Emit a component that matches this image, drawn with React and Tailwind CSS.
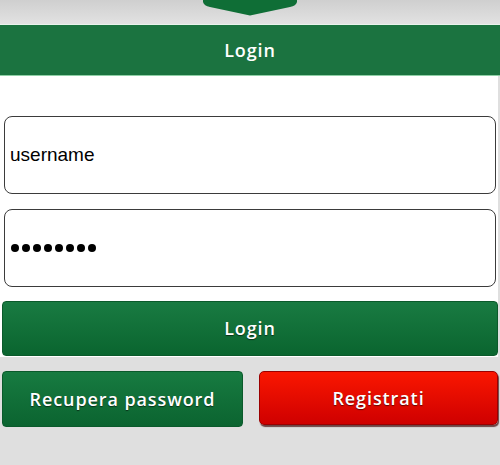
export default function App() {
  const btnText = "text-white text-[18px] font-semibold tracking-[0.9px] [text-shadow:0_1px_1px_rgba(0,0,0,0.55)]";
  return (
    <div className="w-[500px] h-[465px] bg-[#dfdfdf] overflow-hidden" style={{ fontFamily: '"Open Sans", "Noto Sans", sans-serif' }}>
      <div className="h-[24px] bg-gradient-to-b from-[#cfcfcf] to-[#e2e2e2] flex justify-center">
        <svg width="96" height="16" viewBox="0 0 96 16" className="block">
          <path d="M1 0 L1 2 Q2 6 8 7 L48 15.5 L88 7 Q94 6 95 2 L95 0 Z" fill="#0f6e36" />
        </svg>
      </div>
      <div className="h-[1px] bg-[#e9f3ec]" />
      <div className="h-[50px] bg-[#1b7340] flex items-center justify-center">
        <span className="text-white text-[18px] font-semibold tracking-[0.9px]">Login</span>
      </div>
      <div className="h-[1px] bg-[#8fd0a6]" />
      <div className="bg-white pt-[40px] pb-[1px] mr-[2px]">
        <div className="pl-[4px] pr-[2px] flex flex-col gap-[15px]">
          <div className="h-[78px] border-[1.5px] border-[#3b3b3b] rounded-[8px] flex items-center pl-[5px]">
            <span className="text-[19px] text-black" style={{ fontFamily: '"Liberation Sans", Arial, sans-serif' }}>username</span>
          </div>
          <div className="h-[78px] border-[1.5px] border-[#3b3b3b] rounded-[8px] flex items-center pl-[6px] gap-[3px]">
            {[0, 1, 2, 3, 4, 5, 6, 7].map((i) => (
              <span key={i} className="w-[8px] h-[8px] rounded-full bg-black" />
            ))}
          </div>
        </div>
        <div className="pl-[2px] mt-[14px]">
          <div className="h-[55px] rounded-[4px] bg-gradient-to-b from-[#197b42] to-[#0a652f] border border-[#0b5a2b] flex items-center justify-center">
            <span className={btnText}>Login</span>
          </div>
        </div>
      </div>
      <div className="flex px-[2px] pt-[14px] gap-[16px]">
        <div className="w-[241px] h-[56px] rounded-[4px] bg-gradient-to-b from-[#177b41] to-[#0b6430] border border-[#0a5a2b] flex items-center justify-center">
          <span className={btnText}>Recupera password</span>
        </div>
        <div className="flex-1 h-[54px] rounded-[5px] bg-gradient-to-b from-[#fa1600] to-[#cf0000] border border-[#9a0000] shadow-[1px_2px_1px_rgba(60,0,0,0.7)] flex items-center justify-center">
          <span className={btnText}>Registrati</span>
        </div>
      </div>
    </div>
  );
}
